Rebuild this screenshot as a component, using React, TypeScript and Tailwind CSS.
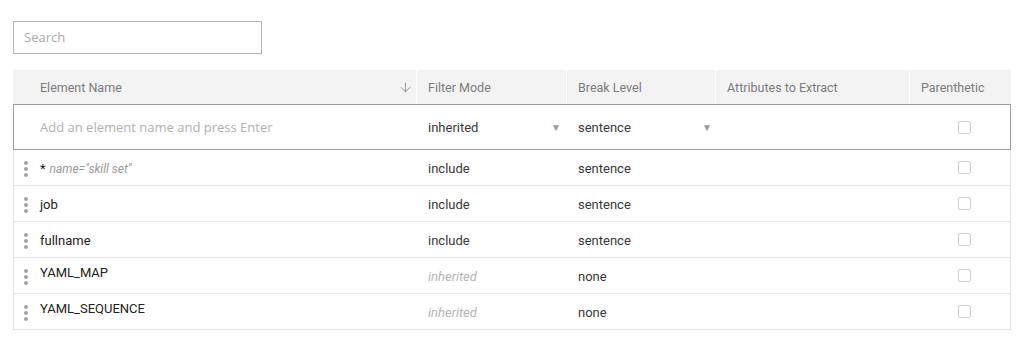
import { ArrowDown } from "lucide-react";

const rows = [
  { name: "*", attr: 'name="skill set"', filter: "include", brk: "sentence" },
  { name: "job", filter: "include", brk: "sentence" },
  { name: "fullname", filter: "include", brk: "sentence" },
  { name: "YAML_MAP", filter: "inherited", inherited: true, brk: "none" },
  { name: "YAML_SEQUENCE", filter: "inherited", inherited: true, brk: "none" },
];

const Checkbox = () => (
  <div className="w-[13px] h-[13px] border border-[#cfcfcf] rounded-[2px] bg-white" />
);

const Handle = () => (
  <div className="flex flex-col gap-[2px] w-[4px] mr-[12px]">
    <span className="w-[4px] h-[4px] rounded-full bg-[#a3a3a3]" />
    <span className="w-[4px] h-[4px] rounded-full bg-[#a3a3a3]" />
    <span className="w-[4px] h-[4px] rounded-full bg-[#a3a3a3]" />
  </div>
);

const Caret = () => <span className="text-[10px] text-[#9a9a9a] leading-none">▼</span>;

export default function App() {
  return (
    <div className="w-[1034px] h-[359px] bg-white font-['Roboto',sans-serif] text-[13px] text-[#383838]">
      <div className="pt-[21px] pl-[13px]">
        {/* search */}
        <div className="w-[249px] h-[33px] border border-[#b4b4b4] flex items-center pl-[10px] pt-[1px] font-['Open_Sans',sans-serif] text-[13px] text-[#aaa]">
          Search
        </div>

        {/* table */}
        <div className="mt-[16px] w-[998px]">
          {/* header */}
          <div className="flex h-[34px] bg-[#f3f3f3] text-[12.5px] text-[#7c7c7c]">
            <div className="w-[404px] flex items-center justify-between pl-[27px] pr-[3px] pt-[3px] border-r border-white">
              <span>Element Name</span>
              <ArrowDown size={15} strokeWidth={1.5} className="text-[#8a8a8a] -mt-[3px]" />
            </div>
            <div className="w-[150px] flex items-center pl-[11px] pt-[3px] border-r border-white">Filter Mode</div>
            <div className="w-[149px] flex items-center pl-[11px] pt-[3px] border-r border-white">Break Level</div>
            <div className="w-[194px] flex items-center pl-[11px] pt-[3px] border-r border-white">Attributes to Extract</div>
            <div className="flex-1 flex items-center pl-[11px] pt-[3px]">Parenthetic</div>
          </div>

          {/* new element row */}
          <div className="flex h-[46px] border border-[#9a9a9a]">
            <div className="w-[403px] flex items-center pl-[26px] pt-[2px] font-['Open_Sans',sans-serif] text-[13px] text-[#b0b0b0]">
              Add an element name and press Enter
            </div>
            <div className="w-[150px] flex items-center justify-between pl-[11px] pr-[6px] pt-[2px]">
              <span>inherited</span>
              <Caret />
            </div>
            <div className="w-[149px] flex items-center justify-between pl-[11px] pr-[4px] pt-[2px]">
              <span>sentence</span>
              <Caret />
            </div>
            <div className="w-[194px]" />
            <div className="flex-1 flex items-center justify-center pl-[8px]">
              <Checkbox />
            </div>
          </div>

          {/* data rows */}
          {rows.map((r) => (
            <div key={r.name} className="flex h-[36px] border-x border-b border-[#e6e6e6]">
              <div className="w-[403px] flex items-center pl-[10px] pt-[2px] text-[#222]">
                <Handle />
                <span className={r.inherited ? "mb-[7px]" : ""}>{r.name}</span>
                {r.attr && (
                  <span className="ml-[4px] italic text-[12px] text-[#9a9a9a]">{r.attr}</span>
                )}
              </div>
              <div
                className={
                  r.inherited
                    ? "w-[150px] flex items-center pl-[11px] pt-[2px] italic text-[#b5b5b5]"
                    : "w-[150px] flex items-center pl-[11px] pt-[2px]"
                }
              >
                {r.filter}
              </div>
              <div className="w-[149px] flex items-center pl-[11px] pt-[2px]">{r.brk}</div>
              <div className="w-[194px]" />
              <div className="flex-1 flex items-center justify-center pl-[8px]">
                <Checkbox />
              </div>
            </div>
          ))}
        </div>
      </div>
    </div>
  );
}
